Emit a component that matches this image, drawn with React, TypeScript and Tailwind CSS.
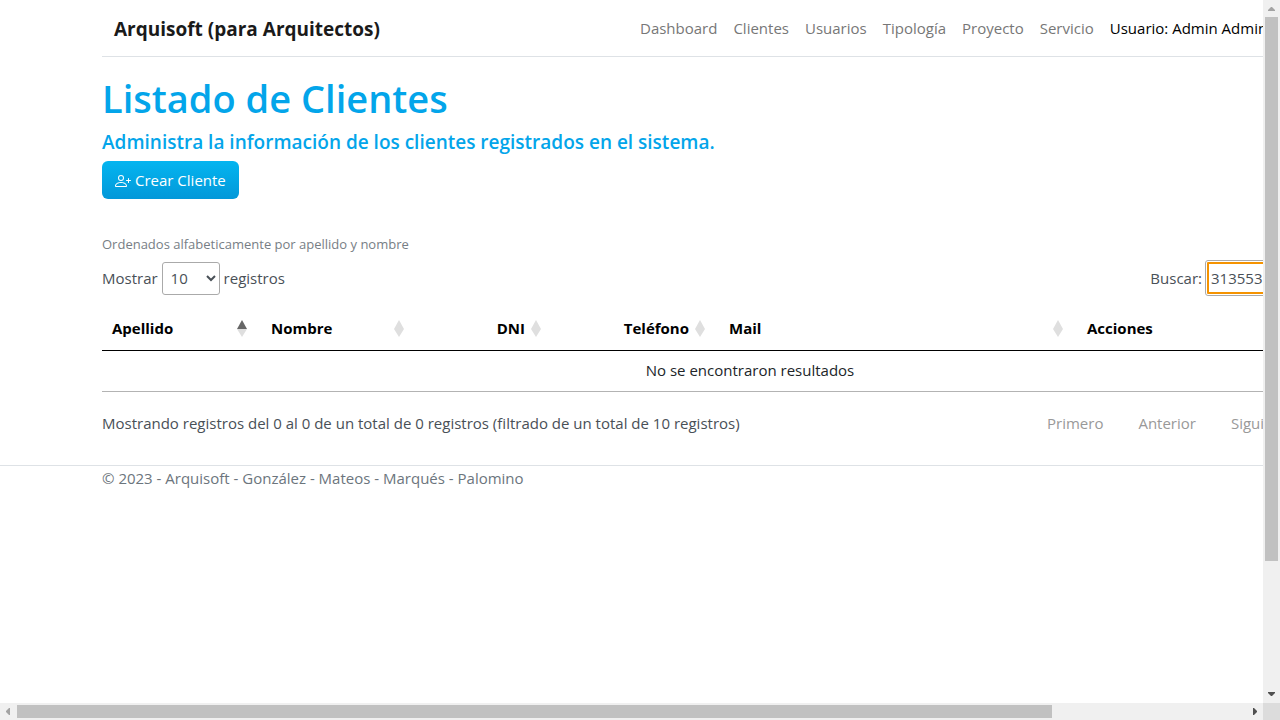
import type { ReactNode } from 'react';

const navItems = ['Dashboard', 'Clientes', 'Usuarios', 'Tipología', 'Proyecto', 'Servicio'];

type Column = {
  label: string;
  col: string;
  align: string;
  sort: 'asc' | 'both' | 'none';
};

const columns: Column[] = [
  { label: 'Apellido', col: 'w-[159px]', align: 'justify-between', sort: 'asc' },
  { label: 'Nombre', col: 'w-[157px]', align: 'justify-between', sort: 'both' },
  { label: 'DNI', col: 'w-[137px]', align: 'justify-end', sort: 'both' },
  { label: 'Teléfono', col: 'w-[164px]', align: 'justify-end', sort: 'both' },
  { label: 'Mail', col: 'w-[358px]', align: 'justify-between', sort: 'both' },
  { label: 'Acciones', col: '', align: 'justify-between', sort: 'none' },
];

function SortIcon({ active }: { active: boolean }) {
  return (
    <svg className="h-[18px] w-[10px] shrink-0" viewBox="0 0 10 18" aria-hidden="true">
      <path d="M5 1 10 10H0Z" fill={active ? '#666' : '#dfdfdf'} />
      <path d="M0 10H10L5 18Z" fill="#dfdfdf" />
    </svg>
  );
}

function PersonPlusIcon() {
  return (
    <svg className="mt-0.5 size-4" viewBox="0 0 16 16" fill="currentColor" aria-hidden="true">
      <path d="M6 8a3 3 0 1 0 0-6 3 3 0 0 0 0 6zm2-3a2 2 0 1 1-4 0 2 2 0 0 1 4 0zm4 8c0 1-1 1-1 1H1s-1 0-1-1 1-4 6-4 6 3 6 4zm-1-.004c-.001-.246-.154-.986-.832-1.664C9.516 10.68 8.289 10 6 10c-2.29 0-3.516.68-4.168 1.332-.678.678-.83 1.418-.832 1.664h10z" />
      <path d="M13.5 5a.5.5 0 0 1 .5.5V7h1.500a.5.5 0 0 1 0 1H14v1.500a.5.5 0 0 1-1 0V8h-1.500a.5.5 0 0 1 0-1H13V5.500a.5.5 0 0 1 .5-.5z" />
    </svg>
  );
}

function ArrowButton({ label, className, children }: { label: string; className: string; children: ReactNode }) {
  return (
    <button type="button" aria-label={label} className={`flex size-[17px] shrink-0 items-center justify-center ${className}`}>
      <svg className="size-[17px]" viewBox="0 0 17 17" fill="currentColor" aria-hidden="true">
        {children}
      </svg>
    </button>
  );
}

function ClientsPage() {
  return (
    <div className="min-w-[1500px]">
      <div className="mx-[102px]">
        <header className="flex h-[57px] items-center border-b border-[#dee2e6] px-3">
          <a href="#" className="pt-0.5 text-[19px] font-bold text-[#1a1a1a]">Arquisoft (para Arquitectos)</a>
          <nav className="ml-auto flex w-[746px] gap-4 whitespace-nowrap text-[#777]">
            {navItems.map((item) => (
              <a key={item} href="#">{item}</a>
            ))}
            <span className="text-black">Usuario: Admin Admin</span>
          </nav>
        </header>

        <main>
          <h1 className="pt-[17px] text-[38px] leading-[48px] font-semibold text-[#03a5ea]">Listado de Clientes</h1>
          <h2 className="pt-2 text-[19px] leading-6 font-semibold text-[#03a5ea]">
            Administra la información de los clientes registrados en el sistema.
          </h2>
          <button
            type="button"
            className="mt-[7px] flex h-[38px] items-center gap-1 rounded-md bg-linear-to-b from-[#04b5f0] to-[#0398d9] px-[13px] text-white"
          >
            <PersonPlusIcon />
            Crear Cliente
          </button>

          <p className="mt-[35px] text-[13px] leading-5 text-[#777e85]">Ordenados alfabeticamente por apellido y nombre</p>

          <div className="mt-1.5 flex h-9 items-center justify-between text-[#495057]">
            <div className="flex items-center gap-1">
              <label htmlFor="page-size">Mostrar</label>
              <select id="page-size" className="h-[33px] w-[58px] rounded-[3px] border border-[#aaa] bg-white px-1">
                <option>10</option>
              </select>
              <span>registros</span>
            </div>
            <div className="flex items-center gap-[3px]">
              <label htmlFor="search">Buscar:</label>
              <input
                id="search"
                type="search"
                defaultValue="31355356"
                className="h-9 w-[193px] rounded-[3px] border border-[#aaa] bg-white px-[5px] outline-2 -outline-offset-4 outline-[#f59300]"
              />
            </div>
          </div>

          <table className="mt-2.5 w-full table-fixed border-collapse">
            <thead>
              <tr className="h-[44px] border-b border-black text-black">
                {columns.map((c) => (
                  <th key={c.label} scope="col" className={`p-0 ${c.col}`}>
                    <div className={`flex items-center gap-1.5 pr-3.5 pl-2.5 font-bold ${c.align}`}>
                      {c.label}
                      {c.sort !== 'none' && <SortIcon active={c.sort === 'asc'} />}
                    </div>
                  </th>
                ))}
              </tr>
            </thead>
            <tbody>
              <tr className="h-[41px] border-b border-[#b3b3b3]">
                <td colSpan={6} className="text-center text-[#212529]">No se encontraron resultados</td>
              </tr>
            </tbody>
          </table>

          <div className="flex h-16 items-center justify-between text-[#495057]">
            <p>Mostrando registros del 0 al 0 de un total de 0 registros (filtrado de un total de 10 registros)</p>
            <div className="flex w-[351px] gap-[35px] text-[#999]">
              <button type="button">Primero</button>
              <button type="button">Anterior</button>
              <button type="button">Siguiente</button>
              <button type="button">Último</button>
            </div>
          </div>
        </main>
      </div>

      <footer className="mt-[9px] border-t border-[#dee2e6] px-[102px] leading-6 text-[#6c757d]">
        © 2023 - Arquisoft - González - Mateos - Marqués - Palomino
      </footer>
    </div>
  );
}

export default function App() {
  return (
    <div className="grid h-screen grid-cols-[minmax(0,1fr)_17px] grid-rows-[minmax(0,1fr)_17px] bg-white font-['Open_Sans','Noto_Sans',sans-serif] text-[15px]">
      <div className="overflow-hidden">
        <ClientsPage />
      </div>
      <div className="flex flex-col items-center bg-[#f0f0f0]">
        <ArrowButton label="Subir" className="text-[#a3a3a3]"><path d="M5 11h7v-1L9 7H8L5 10Z" /></ArrowButton>
        <div className="min-h-0 w-[13px] flex-[544] bg-[#c1c1c1]" />
        <div className="flex-[125]" />
        <ArrowButton label="Bajar" className="text-[#505050]"><path d="M5 6h7v1L9 10H8L5 7Z" /></ArrowButton>
      </div>
      <div className="flex items-center bg-[#f0f0f0]">
        <ArrowButton label="Izquierda" className="text-[#a3a3a3]"><path d="M10 5v7H9L6 9V8L9 5Z" /></ArrowButton>
        <div className="h-[13px] flex-[1035] bg-[#c1c1c1]" />
        <div className="flex-[194]" />
        <ArrowButton label="Derecha" className="text-[#505050]"><path d="M7 5v7h1l3-3V8L8 5Z" /></ArrowButton>
      </div>
      <div className="bg-[#dcdcdc]" />
    </div>
  );
}
